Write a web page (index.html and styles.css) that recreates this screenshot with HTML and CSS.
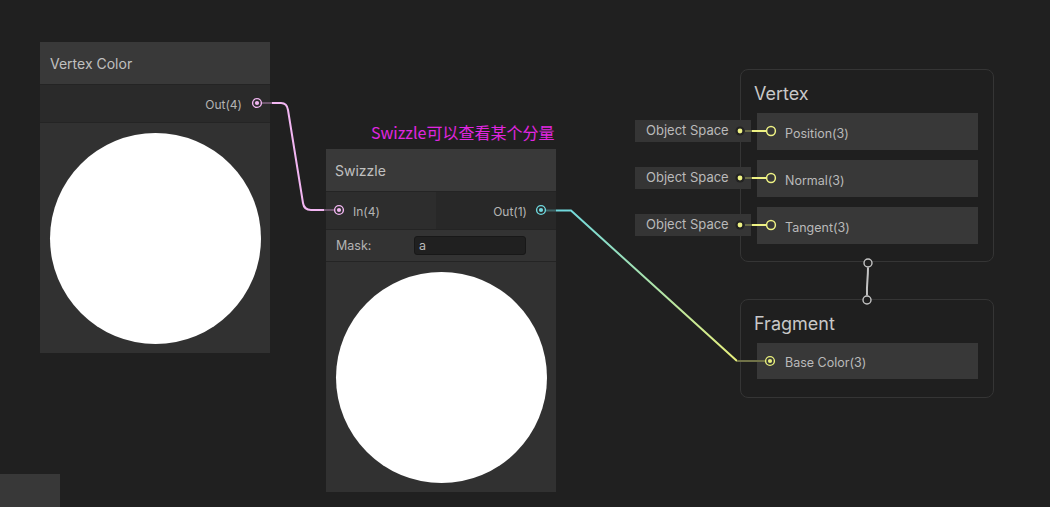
FILE: index.html
```
<!DOCTYPE html>
<html>
<head>
<meta charset="utf-8">
<link rel="stylesheet" href="styles.css">
</head>
<body>
<div class="canvas">
  <div class="node node-vc">
    <div class="node-header">Vertex Color</div>
    <div class="ports">
      <div class="port-out"><span class="port-label">Out(4)</span></div>
    </div>
    <div class="preview"><div class="disc"></div></div>
  </div>

  <div class="note">Swizzle可以查看某个分量</div>

  <div class="node node-sw">
    <div class="node-header">Swizzle</div>
    <div class="ports">
      <div class="port-in"><span class="port-label">In(4)</span></div>
      <div class="port-out port-out-split"><span class="port-label">Out(1)</span></div>
    </div>
    <div class="mask-row"><span class="mask-label">Mask:</span><div class="mask-field">a</div></div>
    <div class="preview"><div class="disc"></div></div>
  </div>

  <div class="context ctx-vertex">
    <div class="ctx-title">Vertex</div>
    <div class="blocks">
      <div class="block"><div class="os">Object Space</div>Position(3)</div>
      <div class="block"><div class="os">Object Space</div>Normal(3)</div>
      <div class="block"><div class="os">Object Space</div>Tangent(3)</div>
    </div>
  </div>

  <div class="context ctx-fragment">
    <div class="ctx-title">Fragment</div>
    <div class="blocks">
      <div class="block block-short">Base Color(3)</div>
    </div>
  </div>

  <div class="dock"></div>

  <svg class="wires" width="1050" height="507" viewBox="0 0 1050 507">
    <defs>
      <linearGradient id="cy" gradientUnits="userSpaceOnUse" x1="560" y1="210" x2="737" y2="361">
        <stop offset="0" stop-color="#6fd8de"/>
        <stop offset="1" stop-color="#e8f07c"/>
      </linearGradient>
    </defs>
    <!-- pink wire -->
    <path d="M262 103 H272" stroke="#6d566d" stroke-width="2" fill="none"/>
    <path d="M272 103 H281 Q287 103 288 110 L303 203 Q304 210 311 210 H324" stroke="#f2b6f2" stroke-width="2" fill="none"/>
    <path d="M324 210 H334" stroke="#6d566d" stroke-width="2" fill="none"/>
    <circle cx="257" cy="103" r="4.4" fill="#2a2a2a" stroke="#f2b6f2" stroke-width="1.4"/>
    <circle cx="257" cy="103" r="2.1" fill="#f2b6f2"/>
    <circle cx="339" cy="210" r="4.4" fill="#2d2d2d" stroke="#f2b6f2" stroke-width="1.4"/>
    <circle cx="339" cy="210" r="2.1" fill="#f2b6f2"/>

    <!-- cyan to yellow wire -->
    <path d="M546 210.5 H556" stroke="#3e6668" stroke-width="2" fill="none"/>
    <path d="M556 210.5 H571 L737 361" stroke="url(#cy)" stroke-width="2" fill="none"/>
    <path d="M737 361 H765" stroke="#707248" stroke-width="2" fill="none"/>
    <circle cx="541" cy="210" r="4.4" fill="#282828" stroke="#6fd8de" stroke-width="1.4"/>
    <circle cx="541" cy="210" r="2.1" fill="#6fd8de"/>
    <circle cx="770" cy="361" r="4.4" fill="#383838" stroke="#e8f07c" stroke-width="1.4"/>
    <circle cx="770" cy="361" r="2.1" fill="#e8f07c"/>

    <!-- object space wires -->
    <g>
      <circle cx="740" cy="131" r="4.6" fill="#222"/>
      <circle cx="740" cy="131" r="2.4" fill="#eef284"/>
      <path d="M745 131 H752" stroke="#6a6c48" stroke-width="2"/>
      <path d="M752 131 H766" stroke="#eef284" stroke-width="2"/>
      <circle cx="771" cy="131" r="4.4" fill="#383838" stroke="#eef284" stroke-width="1.5"/>

      <circle cx="740" cy="178" r="4.6" fill="#222"/>
      <circle cx="740" cy="178" r="2.4" fill="#eef284"/>
      <path d="M745 178 H752" stroke="#6a6c48" stroke-width="2"/>
      <path d="M752 178 H766" stroke="#eef284" stroke-width="2"/>
      <circle cx="771" cy="178" r="4.4" fill="#383838" stroke="#eef284" stroke-width="1.5"/>

      <circle cx="740" cy="225" r="4.6" fill="#222"/>
      <circle cx="740" cy="225" r="2.4" fill="#eef284"/>
      <path d="M745 225 H752" stroke="#6a6c48" stroke-width="2"/>
      <path d="M752 225 H766" stroke="#eef284" stroke-width="2"/>
      <circle cx="771" cy="225" r="4.4" fill="#383838" stroke="#eef284" stroke-width="1.5"/>
    </g>

    <!-- context link -->
    <path d="M868 267.5 C868 280 866.5 283 867 295.5" stroke="#c4c4c4" stroke-width="2" fill="none"/>
    <circle cx="868" cy="263" r="4" fill="#202020" stroke="#c4c4c4" stroke-width="1.4"/>
    <circle cx="867" cy="300" r="4" fill="#202020" stroke="#c4c4c4" stroke-width="1.4"/>
  </svg>
</div>
</body>
</html>
```

FILE: styles.css
```
html, body {
  margin: 0;
  padding: 0;
  background: #202020;
}

body {
  font-family: Inter, "Noto Sans", "Liberation Sans", sans-serif;
  color: #bababa;
}

.canvas {
  position: relative;
  width: 1050px;
  height: 507px;
  overflow: hidden;
  background: #202020;
}

/* graph nodes */
.node {
  position: absolute;
  width: 230px;
  display: flex;
  flex-direction: column;
  background: #232323;
}

.node-vc {
  left: 40px;
  top: 42px;
}

.node-sw {
  left: 326px;
  top: 149px;
}

.node-header {
  height: 42px;
  display: flex;
  align-items: center;
  padding-left: 10px;
  background: #393939;
  border-bottom: 1px solid #242424;
  font-size: 14px;
  color: #c0c0c0;
}

.node-sw .node-header {
  padding-left: 9px;
}

.ports {
  height: 37px;
  display: flex;
  background: #2a2a2a;
  border-bottom: 1px solid #242424;
}

.port-in {
  width: 83px;
  display: flex;
  align-items: center;
  padding-left: 27px;
  background: #2d2d2d;
}

.port-out {
  flex: 1;
  display: flex;
  align-items: center;
  justify-content: flex-end;
  padding-right: 28px;
}

.port-out-split {
  background: #282828;
  padding-right: 29px;
}

.port-label {
  font-size: 12px;
  color: #b4b4b4;
  padding-top: 2px;
}

.mask-row {
  height: 31px;
  display: flex;
  align-items: center;
  padding-left: 10px;
  background: #333333;
  border-bottom: 1px solid #242424;
  font-size: 12.5px;
  color: #b4b4b4;
}

.mask-label {
  width: 78px;
}

.mask-field {
  width: 106px;
  height: 17px;
  padding-left: 4px;
  display: flex;
  align-items: center;
  background: #202020;
  border: 1px solid #181818;
  border-radius: 3px;
  font-size: 12.5px;
  color: #bababa;
}

.preview {
  height: 230px;
  display: flex;
  align-items: center;
  justify-content: center;
  background: #313131;
}

.disc {
  width: 211px;
  height: 211px;
  border-radius: 50%;
  background: #ffffff;
}

.note {
  position: absolute;
  left: 371px;
  top: 121px;
  font-family: "Noto Sans CJK SC", "Noto Sans", sans-serif;
  font-size: 16px;
  line-height: 22px;
  color: #e026e0;
  white-space: nowrap;
}

/* master stack contexts */
.context {
  position: absolute;
  left: 740px;
  width: 254px;
  box-sizing: border-box;
  border: 1px solid #353535;
  border-radius: 8px;
  background: #1f1f1f;
  padding: 0 0 17px 13px;
}

.ctx-vertex {
  top: 69px;
}

.ctx-fragment {
  top: 299px;
  padding-bottom: 18px;
}

.ctx-title {
  height: 43px;
  box-sizing: border-box;
  padding-top: 4px;
  display: flex;
  align-items: center;
  font-size: 18px;
  color: #c8c8c8;
}

.blocks {
  display: flex;
  flex-direction: column;
  gap: 10px;
  margin-left: 3px;
  width: 221px;
}

.block {
  position: relative;
  height: 37px;
  box-sizing: border-box;
  padding: 3px 0 0 28px;
  display: flex;
  align-items: center;
  background: #383838;
  font-size: 12.5px;
  color: #bababa;
}

.block-short {
  height: 36px;
}

.os {
  position: absolute;
  left: -122px;
  top: 7px;
  width: 116px;
  height: 22px;
  box-sizing: border-box;
  padding: 0 0 2px 11px;
  display: flex;
  align-items: center;
  background: #353535;
  font-size: 13px;
  color: #bababa;
  white-space: nowrap;
}

.dock {
  position: absolute;
  left: 0;
  top: 474px;
  width: 60px;
  height: 33px;
  background: #383838;
}

.wires {
  position: absolute;
  left: 0;
  top: 0;
  pointer-events: none;
}
```
